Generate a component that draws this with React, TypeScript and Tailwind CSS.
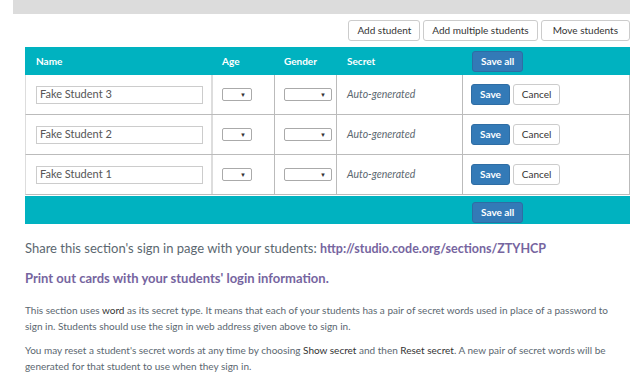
import { FC } from "react";

type Student = { name: string };

const students: Student[] = [
  { name: "Fake Student 3" },
  { name: "Fake Student 2" },
  { name: "Fake Student 1" },
];

const Dropdown: FC<{ width: string }> = ({ width }) => (
  <div
    className={`${width} h-[13px] border border-[#aaa] rounded-[2px] bg-white flex items-center justify-end pr-[5px]`}
  >
    <span className="text-[6px] leading-none text-[#333]">▼</span>
  </div>
);

const SaveButton: FC<{ label: string }> = ({ label }) => (
  <button className="h-[21px] px-[8px] rounded-[3px] bg-[#337ab7] border border-[#2e6da4] text-white text-[10px] font-bold">
    {label}
  </button>
);

const TopButton: FC<{ label: string }> = ({ label }) => (
  <button className="h-[21px] px-[8px] rounded-[3px] bg-white border border-[#ccc] text-[#333] text-[10px]">
    {label}
  </button>
);

const StudentRow: FC<{ student: Student }> = ({ student }) => (
  <div className="flex h-[40px] border-b border-[#bbb] border-l border-l-[#ddd] border-r border-r-[#bbb]">
    <div className="w-[187px] flex items-center pl-[10px] border-r-2 border-[#ddd]">
      <div className="w-[167px] h-[18px] border border-[#ccc] flex items-center pl-[3px] text-[11px] text-[#555]">
        {student.name}
      </div>
    </div>
    <div className="w-[62px] flex items-center pl-[9px] border-r border-[#bbb]">
      <Dropdown width="w-[30px]" />
    </div>
    <div className="w-[62px] flex items-center pl-[9px] border-r border-[#bbb]">
      <Dropdown width="w-[48px]" />
    </div>
    <div className="w-[126px] flex items-center pl-[10px] border-r border-[#bbb] italic text-[10.5px] text-[#5b6770]">
      Auto-generated
    </div>
    <div className="flex-1 flex items-center pl-[8px] gap-[3px]">
      <SaveButton label="Save" />
      <TopButton label="Cancel" />
    </div>
  </div>
);

const App: FC = () => {
  return (
    <div
      className="w-[640px] h-[376px] bg-white overflow-hidden"
      style={{ fontFamily: "Lato, 'Noto Sans', sans-serif" }}
    >
      <div className="ml-[13px] w-[617px] h-[14px] bg-[#dcdcdc]" />

      <div className="w-[630px] flex justify-end gap-[3px] mt-[6px]">
        <TopButton label="Add student" />
        <TopButton label="Add multiple students" />
        <button className="h-[21px] px-[11px] rounded-[3px] bg-white border border-[#ccc] text-[#333] text-[10px]">
          Move students
        </button>
      </div>

      <div className="ml-[25px] w-[605px] mt-[6px]">
        <div className="flex h-[28px] bg-[#00b2c0] text-white text-[10px] font-bold items-center">
          <div className="w-[188px] pl-[11px]">Name</div>
          <div className="w-[62px] pl-[9px]">Age</div>
          <div className="w-[62px] pl-[9px]">Gender</div>
          <div className="w-[126px] pl-[10px]">Secret</div>
          <div className="flex-1 pl-[9px]">
            <SaveButton label="Save all" />
          </div>
        </div>
        {students.map((s) => (
          <StudentRow key={`student-${s.name}`} student={s} />
        ))}
        <div className="flex h-[28px] bg-[#00b2c0] items-center mt-[1px]">
          <div className="w-[438px]" />
          <div className="flex-1 pl-[9px]">
            <SaveButton label="Save all" />
          </div>
        </div>
      </div>

      <div className="ml-[25px] mt-[15px] text-[13px] leading-[18px] text-[#5b6770]">
        Share this section's sign in page with your students:{" "}
        <span className="text-[12.5px] font-bold text-[#7665a0]">
          http://studio.code.org/sections/ZTYHCP
        </span>
      </div>
      <div className="ml-[25px] mt-[11px] text-[13px] leading-[18px] font-bold text-[#7665a0]">
        Print out cards with your students' login information.
      </div>

      <div className="ml-[25px] w-[595px] mt-[15px] text-[10px] leading-[16px] text-[#5b6770]">
        <p>
          This section uses <span className="text-[#333]">word</span> as its secret type. It means
          that each of your students has a pair of secret words used in place of a password to
          sign in. Students should use the sign in web address given above to sign in.
        </p>
        <p className="mt-[8px]">
          You may reset a student's secret words at any time by choosing{" "}
          <span className="text-[#333]">Show secret</span> and then{" "}
          <span className="text-[#333]">Reset secret</span>. A new pair of secret words will be
          generated for that student to use when they sign in.
        </p>
      </div>
    </div>
  );
};

export default App;
